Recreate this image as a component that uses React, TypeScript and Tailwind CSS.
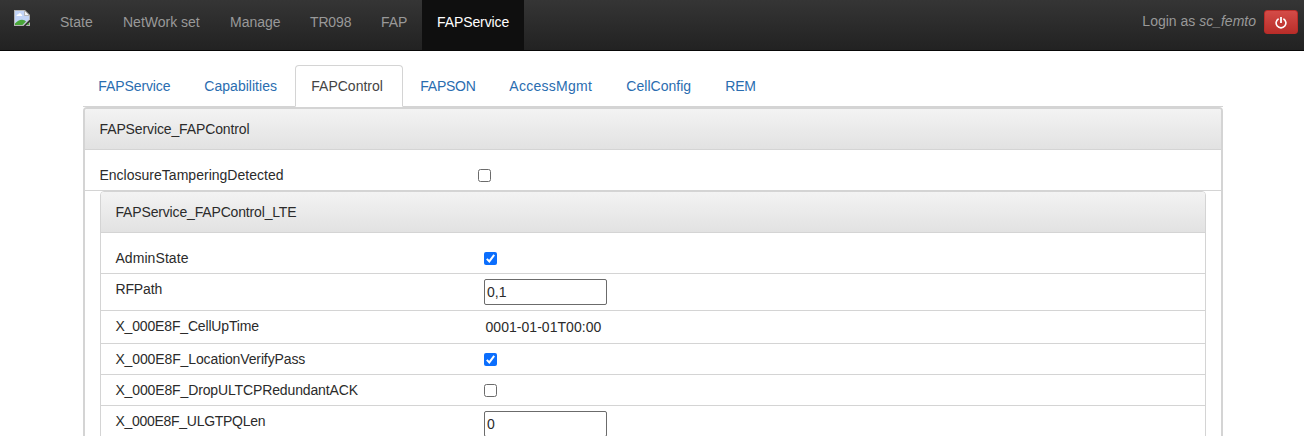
import React from "react";

const font = "font-['Liberation_Sans',Arial,sans-serif]";

const navItems = [
  { label: "State", box: "w-[63px]" },
  { label: "NetWork set", box: "w-[107px]" },
  { label: "Manage", box: "w-[80px]" },
  { label: "TR098", box: "w-[71px] tracking-[-0.15px]" },
  { label: "FAP", box: "w-[56px]" },
  { label: "FAPService", box: "w-[102px] tracking-[-0.1px]", active: true },
];

const tabs = [
  { label: "FAPService", box: "-ml-px w-[106px] tracking-[-0.1px]" },
  { label: "Capabilities", box: "w-[107px] tracking-[0.03px]" },
  { label: "FAPControl", box: "mr-px w-[108px]", active: true },
  { label: "FAPSON", box: "w-[89px] tracking-[-0.25px]" },
  { label: "AccessMgmt", box: "w-[117px] tracking-[0.28px]" },
  { label: "CellConfig", box: "w-[99px] tracking-[0.03px]" },
  { label: "REM", box: "w-[62px] tracking-[-0.2px]" },
];

function BrokenImage() {
  return (
    <svg width="16" height="16" viewBox="0 0 16 16" className="block">
      <path d="M0 0h11l5 5v4.500L9.500 16H0z" fill="#b5b5b5" />
      <path d="M1 1h9.500L15 5.500V9.500L9 15H1z" fill="#c3d5f8" />
      <path d="M10.500 .5L15.500 5.500h-5z" fill="#f6f6f6" stroke="#a9a9a9" strokeWidth=".8" />
      <path d="M2.500 6c0-1.400 1-1.800 1.700-1.500C4.700 2.800 7 3 7.300 4.500 8.500 4.500 8.500 6 7.800 6z" fill="#fff" />
      <path d="M1 15v-1.500C3 11.500 5.500 9.800 8 9.800c1.800 0 3 .7 4 1.700L8.500 15z" fill="#4aa63a" />
      <path d="M16 12v4h-4.500z" fill="#b5b5b5" />
      <path d="M15 12.500V15h-2.500z" fill="#4aa63a" />
    </svg>
  );
}

function PowerIcon() {
  return (
    <svg width="12" height="13" viewBox="0 0 12 13" fill="none" stroke="#fff" strokeWidth="1.600" className="block">
      <path d="M3.600 2.700a4.900 4.900 0 1 0 4.800 0" />
      <path d="M6 1v6" strokeWidth="1.800" />
    </svg>
  );
}

function Check({ checked = false }: { checked?: boolean }) {
  return checked ? (
    <span role="checkbox" aria-checked="true" className="block h-[13px] w-[13px] rounded-[2px] bg-[#0b6efd]">
      <svg width="13" height="13" viewBox="0 0 13 13" className="block">
        <path d="M2.800 6.900l2.500 2.500 4.900-6.500" fill="none" stroke="#fff" strokeWidth="2" />
      </svg>
    </span>
  ) : (
    <span role="checkbox" aria-checked="false" className="block h-[13px] w-[13px] rounded-[2.5px] border border-[#6b6b6b] bg-white" />
  );
}

function Header({ tracking, children }: { tracking: string; children: React.ReactNode }) {
  return (
    <div
      className={`h-[41px] border-b border-[#d4d4d4] bg-linear-to-b from-[#f3f3f3] to-[#e2e2e2] pt-[10px] pl-[14.5px] ${tracking}`}
    >
      {children}
    </div>
  );
}

function Row({
  label,
  box,
  tracking = "",
  value,
}: {
  label: string;
  box: string;
  tracking?: string;
  value: React.ReactNode;
}) {
  return (
    <div className={`flex border-b border-[#d4d4d4] pl-[14px] ${box}`}>
      <div className={`w-[369px] shrink-0 pl-[0.4px] ${tracking}`}>{label}</div>
      {value}
    </div>
  );
}

function TextBox({ children }: { children: string }) {
  return (
    <div className="h-[26px] w-[123px] rounded-[2px] border border-[#6b6b6b] bg-white pt-[2px] pl-[2px]">{children}</div>
  );
}

export default function App() {
  return (
    <div className={`h-[436px] w-[1304px] overflow-hidden bg-white text-[14px] leading-[20px] text-[#2b2b2b] ${font}`}>
      <nav className="flex h-[51px] border-b border-[#080808] bg-linear-to-b from-[#353535] to-[#222] text-[#999]">
        <div className="w-[45px] pt-[10px] pl-[14px]">
          <BrokenImage />
        </div>
        {navItems.map((n) => (
          <div
            key={n.label}
            className={`pt-[12px] pl-[15px] whitespace-nowrap ${n.box} ${n.active ? "bg-[#0f0f0f] text-white" : ""}`}
          >
            {n.label}
          </div>
        ))}
        <div className="ml-auto flex pr-[6px]">
          <div className="pt-[11px] pr-[8px]">
            Login as <i>sc_femto</i>
          </div>
          <button className="mt-[10px] flex h-[24px] w-[34px] items-center justify-center rounded-[3px] border border-[#b92c28] bg-linear-to-b from-[#d44b47] to-[#b92e2a]">
            <PowerIcon />
          </button>
        </div>
      </nav>

      <main className="ml-[83px] w-[1140px]">
        <div className="flex h-[56px] border-b border-[#d4d4d4] pt-[14px]">
          {tabs.map((t) => (
            <div
              key={t.label}
              className={`h-[42px] shrink-0 border pt-[10px] pl-[15.3px] ${t.box} ${
                t.active
                  ? "rounded-t-[4px] border-[#d4d4d4] border-b-white bg-white text-[#444]"
                  : "border-transparent text-[#2a6db0]"
              }`}
            >
              {t.label}
            </div>
          ))}
        </div>

        <section className="h-[400px] overflow-hidden rounded-t-[4px] border-2 border-[#d4d4d4]">
          <Header tracking="tracking-[-0.12px]">FAPService_FAPControl</Header>
          <Row
            box="h-[41px] pt-[15px]"
            tracking="tracking-[0.02px]"
            label="EnclosureTamperingDetected"
            value={<div className="pt-[4px] pl-[10px]"><Check /></div>}
          />
          <div className="ml-[15px] h-[300px] w-[1106px] overflow-hidden rounded-t-[4px] border border-[#d4d4d4]">
            <Header tracking="tracking-[-0.16px]">FAPService_FAPControl_LTE</Header>
            <Row
              box="h-[41px] pt-[15px]"
              tracking="tracking-[0.08px]"
              label="AdminState"
              value={<div className="pt-[4px]"><Check checked /></div>}
            />
            <Row box="h-[37px] pt-[5px]" tracking="tracking-[-0.1px]" label="RFPath" value={<TextBox>0,1</TextBox>} />
            <Row
              box="h-[33px] pt-[5px]"
              tracking="tracking-[-0.16px]"
              label="X_000E8F_CellUpTime"
              value={<div className="pt-px pl-[1.5px] tracking-[0.04px]">0001-01-01T00:00</div>}
            />
            <Row
              box="h-[31px] pt-[5px]"
              tracking="tracking-[-0.12px]"
              label="X_000E8F_LocationVerifyPass"
              value={<div className="pt-[4px]"><Check checked /></div>}
            />
            <Row
              box="h-[31px] pt-[5px]"
              tracking="tracking-[-0.13px]"
              label="X_000E8F_DropULTCPRedundantACK"
              value={<div className="pt-[4px]"><Check /></div>}
            />
            <Row
              box="h-[37px] pt-[5px]"
              tracking="tracking-[-0.28px]"
              label="X_000E8F_ULGTPQLen"
              value={<TextBox>0</TextBox>}
            />
          </div>
        </section>
      </main>
    </div>
  );
}
